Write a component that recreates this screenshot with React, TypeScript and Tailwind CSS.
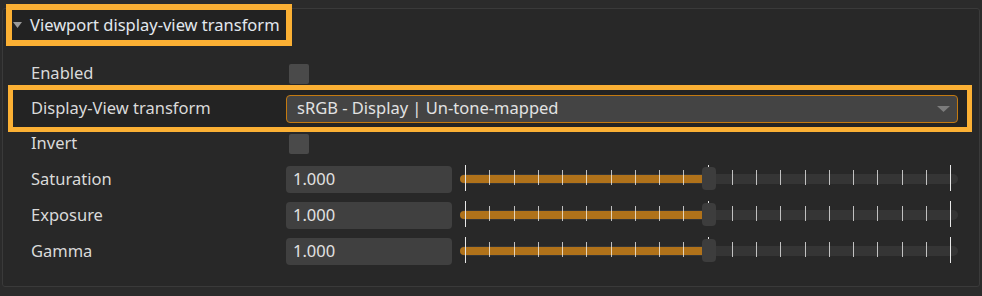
import React from "react";

const font = { fontFamily: '"Noto Sans", "Open Sans", sans-serif' };

function Slider() {
  const ticks = Array.from({ length: 21 }, (_, i) => i);
  return (
    <div className="relative w-[498px] h-full">
      <div className="absolute left-0 right-0 top-[13px] h-[10px] rounded-full bg-[#353535]" />
      <div className="absolute left-0 w-[246px] top-[14px] h-[8px] rounded-l-full bg-[#b0721a]" />
      {ticks.map((i) => {
        const x = 5 + i * 24.25;
        const big = i === 0 || i === 20;
        const mid = i === 10;
        return (
          <div
            key={i}
            className={
              big
                ? "absolute w-px top-[4px] h-[26px] bg-[#e8e8e8]"
                : mid
                ? "absolute w-px top-[4px] h-[24px] bg-[#e8e8e8]"
                : "absolute w-px top-[9px] h-[15px] bg-white/70"
            }
            style={{ left: Math.round(x) }}
          />
        );
      })}
      <div className="absolute left-[242px] top-[6px] w-[14px] h-[23px] rounded-[4px] bg-[#3d3d3d]" />
    </div>
  );
}

function NumRow({ label }: { label: string }) {
  return (
    <div className="flex items-center h-[36px] pl-[28px]">
      <div className="w-[255px] text-[16.5px] text-[#dadada]">{label}</div>
      <div className="w-[166px] h-[27px] rounded-[4px] bg-[#404040] flex items-center pl-[7px] text-[16.5px] text-[#e2e2e2]">
        1.000
      </div>
      <div className="ml-[8px] h-full">
        <Slider />
      </div>
    </div>
  );
}

function CheckRow({ label }: { label: string }) {
  return (
    <div className="flex items-center h-[35px] pl-[28px]">
      <div className="w-[255px] text-[16.5px] text-[#dadada]">{label}</div>
      <div className="ml-[3px] w-[20px] h-[20px] rounded-[2px] bg-[#4a4a4a]" />
    </div>
  );
}

export default function App() {
  return (
    <div className="w-[982px] h-[296px] bg-[#2b2b2b] pt-[8px] pl-[2px]" style={font}>
      <div className="w-[978px] h-[279px] border border-[#3a3a3a] bg-[#282828] rounded-[3px]">
        <div className="-mt-[5px] ml-[3px] w-[286px] h-[42px] border-[6px] border-[#fbb034] bg-[#222222] flex items-center">
          <svg width="9" height="6" viewBox="0 0 9 6" className="ml-[1px]">
            <polygon points="0,0 9,0 4.5,6" fill="#9a9a9a" />
          </svg>
          <span className="ml-[8px] text-[16.5px] text-[#e2e8ee] leading-none">Viewport display-view transform</span>
        </div>
        <div className="mt-[10px]">
          <CheckRow label="Enabled" />
          <div className="relative h-[35px]">
            <div className="absolute left-[5px] right-[7px] -top-[6px] -bottom-[6px] border-[5px] border-[#fbb034] bg-[#232323]" />
            <div className="relative flex items-center h-full pl-[28px]">
              <div className="w-[255px] text-[16.5px] text-[#dadada]">Display-View transform</div>
              <div className="w-[672px] h-[28px] rounded-[4px] border border-[#c47a10] bg-[#444444] flex items-center pl-[10px] pr-[7px]">
                <span className="flex-1 text-[16.5px] text-[#e2e2e2]">sRGB - Display | Un-tone-mapped</span>
                <svg width="13" height="6" viewBox="0 0 13 6">
                  <polygon points="0,0 13,0 6.5,6" fill="#7c7c7c" />
                </svg>
              </div>
            </div>
          </div>
          <CheckRow label="Invert" />
          <NumRow label="Saturation" />
          <NumRow label="Exposure" />
          <NumRow label="Gamma" />
        </div>
      </div>
    </div>
  );
}
